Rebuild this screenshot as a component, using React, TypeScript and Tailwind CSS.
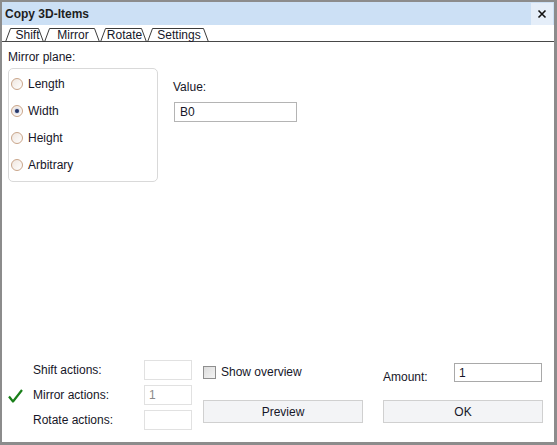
import React from 'react';

const tabs = [
  { label: 'Shift', w: 39, pad: 6 },
  { label: 'Mirror', w: 56, pad: 2 },
  { label: 'Rotate', w: 47, pad: 2 },
  { label: 'Settings', w: 62, pad: 2 },
];

function Tab({ label, w, pad }: { label: string; w: number; pad: number }) {
  return (
    <div className="relative h-[13px] flex items-center justify-center" style={{ width: w, paddingLeft: pad }}>
      <svg className="absolute left-0 top-0" width={w} height={14} viewBox={`0 0 ${w} 14`}>
        <path d={`M0.5 14 L5.5 0.5 L${w - 5.5} 0.5 L${w - 0.5} 14`} fill="none" stroke="#3c3c3c" strokeWidth="1" />
      </svg>
      <span className="relative leading-[13px] pt-[1px]">{label}</span>
    </div>
  );
}

function Radio({ label, checked }: { label: string; checked?: boolean }) {
  return (
    <div className="h-[27px] flex items-center gap-[5px]">
      <div className="w-[12px] h-[12px] rounded-full border border-[#c9a58a] bg-gradient-to-br from-[#efe6df] to-white flex items-center justify-center">
        {checked && <div className="w-[4px] h-[4px] rounded-full bg-[#27396a] shadow-[0_0_2px_#6b84c4]" />}
      </div>
      <span>{label}</span>
    </div>
  );
}

function ActionRow({ label, value, done }: { label: string; value?: string; done?: boolean }) {
  return (
    <div className="h-[25px] flex items-start">
      <div className="w-[25px] h-[20px] flex items-center pl-[6px] pt-[2px]">
        {done && (
          <svg width="15" height="14" viewBox="0 0 15 14">
            <path d="M1 7.5 L5 12.5 L14 1" fill="none" stroke="#1a7f1a" strokeWidth="2.2" strokeLinejoin="round" />
          </svg>
        )}
      </div>
      <div className="w-[117px] h-[20px] flex items-center pl-[6px]">{label}</div>
      <div className="w-[48px] h-[20px] border border-[#e1e1e1] flex items-center pl-[4px] text-[#8a8a8a]">{value}</div>
    </div>
  );
}

export default function App() {
  return (
    <div className="w-[557px] h-[445px] bg-white border-[#8c8c8c] border-l-2 border-t-2 border-r-[3px] border-b-[3px] flex flex-col font-['Liberation_Sans',Arial,sans-serif] text-[12px] text-[#161628]">
      {/* Title bar */}
      <div className="h-[23px] bg-[#cce0f5] flex items-start justify-between">
        <div className="pl-[3px] h-[23px] flex items-center font-bold text-[#1e1e1e]">Copy 3D-Items</div>
        <div className="w-[22px] h-[22px] mt-[1px] mr-[1px] bg-[#e5eef9] flex items-center justify-center">
          <svg width="10" height="10" viewBox="0 0 10 10">
            <path d="M1.5 1.5 L8.5 8.5 M8.5 1.5 L1.5 8.5" stroke="#111" strokeWidth="1.6" />
          </svg>
        </div>
      </div>

      {/* Tabs */}
      <div className="h-[17px] pt-[3px] pl-[3px] border-b border-[#474747] flex items-end">
        {tabs.map(t => (
          <Tab key={t.label} label={t.label} w={t.w} pad={t.pad} />
        ))}
      </div>

      {/* Mirror page */}
      <div className="flex pl-[6px] pt-[8px]">
        <div className="flex flex-col">
          <div className="h-[14px] leading-[14px]">Mirror plane:</div>
          <div className="mt-[4px] w-[150px] h-[114px] rounded-[5px] border border-[#d9d9d9] pt-[1px] pl-[2px]">
            <Radio label="Length" />
            <Radio label="Width" checked />
            <Radio label="Height" />
            <Radio label="Arbitrary" />
          </div>
        </div>
        <div className="ml-[15px] pt-[30px] flex flex-col">
          <div className="h-[14px] leading-[14px]">Value:</div>
          <div className="mt-[8px] ml-[1px] w-[123px] h-[20px] border border-[#b4b4b4] flex items-center pl-[5px]">B0</div>
        </div>
      </div>

      {/* Bottom */}
      <div className="mt-auto pb-[7px] flex">
        <div className="flex flex-col">
          <ActionRow label="Shift actions:" />
          <ActionRow label="Mirror actions:" value="1" done />
          <ActionRow label="Rotate actions:" />
        </div>
        <div className="ml-[11px] w-[160px] flex flex-col pt-[5px]">
          <div className="h-[14px] flex items-center gap-[5px]">
            <div className="w-[13px] h-[13px] border border-[#8e8e8e] bg-gradient-to-br from-[#dcdcdc] to-[#f4f4f4]" />
            <span>Show overview</span>
          </div>
          <div className="mt-[21px] h-[23px] bg-[#f3f4f6] border border-[#d0d0d0] flex items-center justify-center">Preview</div>
        </div>
        <div className="ml-[20px] w-[160px] flex flex-col pt-[3px]">
          <div className="h-[19px] flex items-center">
            <span className="w-[71px] pt-[8px]">Amount:</span>
            <div className="w-[88px] h-[19px] border border-[#a9a9a9] flex items-center pl-[4px]">1</div>
          </div>
          <div className="mt-[18px] h-[23px] bg-[#f3f4f6] border border-[#d0d0d0] flex items-center justify-center">OK</div>
        </div>
      </div>
    </div>
  );
}
